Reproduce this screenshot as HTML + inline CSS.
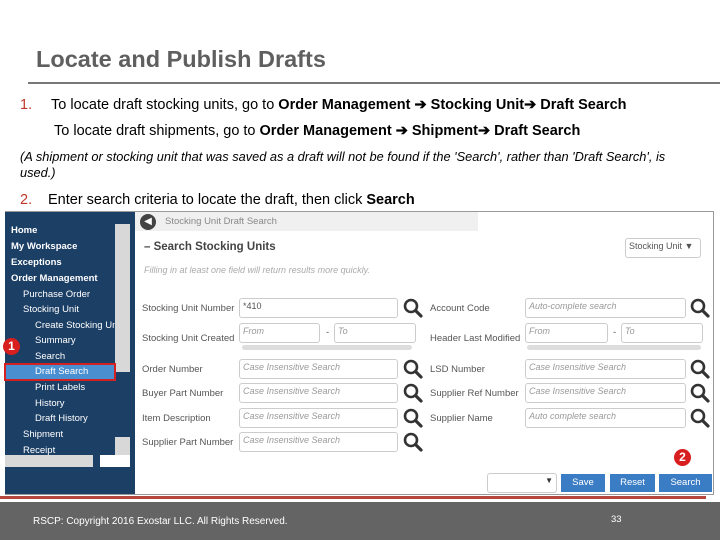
<!DOCTYPE html>
<html><head><meta charset="utf-8"><style>
body{margin:0;width:720px;height:540px;position:relative;overflow:hidden;background:#fff;font-family:"Liberation Sans",sans-serif}
.a{position:absolute;white-space:nowrap}
.t{font-size:14.5px;color:#000}
.sb{font-size:9.5px;color:#fff;font-weight:bold}
.sn{font-size:9.5px;color:#fff}
.lb{font-size:9.5px;color:#555}
.in{position:absolute;border:1px solid #ccc;border-radius:3px;background:#fff;font-size:9px;color:#999;font-style:italic;box-sizing:border-box;padding:2px 3px;height:20px}
.btn{position:absolute;top:474px;height:18px;background:#3b7dc4;color:#fff;font-size:9.5px;text-align:center;line-height:18px}
.rc{position:absolute;width:17px;height:17px;border-radius:50%;background:#d81e1e;color:#fff;font-weight:bold;font-size:12px;text-align:center;line-height:17px}
</style></head><body>
<div class="a" style="left:36px;top:46px;font-size:23.5px;font-weight:bold;color:#5f5f5f">Locate and Publish Drafts</div>
<div class="a" style="left:28px;top:82px;width:692px;height:2px;background:#777"></div>
<div class="a t" style="left:20px;top:97px;color:#c0392b">1.</div>
<div class="a t" style="left:51px;top:97px">To locate draft stocking units, go to <b>Order Management ➔ Stocking Unit➔ Draft Search</b></div>
<div class="a t" style="left:54px;top:123px">To locate draft shipments, go to <b>Order Management ➔ Shipment➔ Draft Search</b></div>
<div class="a" style="left:20px;top:149px;font-size:12.8px;font-style:italic">(A shipment or stocking unit that was saved as a draft will not be found if the 'Search', rather than 'Draft Search', is</div>
<div class="a" style="left:20px;top:165px;font-size:12.8px;font-style:italic">used.)</div>
<div class="a t" style="left:20px;top:192px;color:#c0392b">2.</div>
<div class="a t" style="left:48px;top:192px">Enter search criteria to locate the draft, then click <b>Search</b></div>

<div class="a" style="left:5px;top:211px;width:709px;height:284px;border:1px solid #999;box-sizing:border-box"></div>
<div class="a" style="left:5px;top:212px;width:130px;height:282px;background:#1c3f66"></div>
<div class="a" style="left:115px;top:224px;width:15px;height:148px;background:#d8d8d8"></div>
<div class="a" style="left:115px;top:437px;width:15px;height:30px;background:#d8d8d8"></div>
<div class="a" style="left:5px;top:455px;width:88px;height:12px;background:#d8d8d8"></div>
<div class="a" style="left:100px;top:455px;width:30px;height:12px;background:#fff"></div>
<div class="a sb" style="left:11px;top:225px">Home</div>
<div class="a sb" style="left:11px;top:241px">My Workspace</div>
<div class="a sb" style="left:11px;top:257px">Exceptions</div>
<div class="a sb" style="left:11px;top:273px">Order Management</div>
<div class="a sn" style="left:23px;top:289px">Purchase Order</div>
<div class="a sn" style="left:23px;top:304px">Stocking Unit</div>
<div class="a sn" style="left:35px;top:320px;width:80px;overflow:hidden">Create Stocking Unit</div>
<div class="a sn" style="left:35px;top:335px">Summary</div>
<div class="a sn" style="left:35px;top:351px">Search</div>
<div class="a" style="left:4px;top:363px;width:112px;height:18px;background:#4a8fd0;border:2px solid #d42020;box-sizing:border-box"></div>
<div class="a sn" style="left:35px;top:366px">Draft Search</div>
<div class="a sn" style="left:35px;top:382px">Print Labels</div>
<div class="a sn" style="left:35px;top:398px">History</div>
<div class="a sn" style="left:35px;top:413px">Draft History</div>
<div class="a sn" style="left:23px;top:429px">Shipment</div>
<div class="a sn" style="left:23px;top:445px">Receipt</div>
<div class="rc" style="left:3px;top:338px">1</div>

<div class="a" style="left:135px;top:212px;width:343px;height:19px;background:#f0f0f0"></div>
<div class="a" style="left:140px;top:214px;width:16px;height:16px;border-radius:50%;background:#444;color:#fff;font-size:10px;text-align:center;line-height:16px">◀</div>
<div class="a" style="left:165px;top:216px;font-size:9.5px;color:#888">Stocking Unit Draft Search</div>
<div class="a" style="left:144px;top:241px;font-size:11.5px;font-weight:bold;color:#444">– Search Stocking Units</div>
<div class="a" style="left:144px;top:265px;font-size:9px;font-style:italic;color:#aaa">Filling in at least one field will return results more quickly.</div>
<div class="in" style="left:625px;top:238px;width:76px;font-style:normal;color:#555">Stocking Unit ▼</div>

<div class="a lb" style="left:142px;top:303px">Stocking Unit Number</div>
<div class="in" style="left:239px;top:298px;width:159px;font-style:normal;color:#555">*410</div>
<div class="a lb" style="left:142px;top:333px">Stocking Unit Created</div>
<div class="in" style="left:239px;top:323px;width:81px">From</div>
<div class="a lb" style="left:326px;top:327px">-</div>
<div class="in" style="left:334px;top:323px;width:82px">To</div>
<div class="a" style="left:242px;top:345px;width:170px;height:5px;background:#ddd;border-radius:3px"></div>
<div class="a lb" style="left:142px;top:364px">Order Number</div>
<div class="in" style="left:239px;top:359px;width:159px">Case Insensitive Search</div>
<div class="a lb" style="left:142px;top:388px">Buyer Part Number</div>
<div class="in" style="left:239px;top:383px;width:159px">Case Insensitive Search</div>
<div class="a lb" style="left:142px;top:413px">Item Description</div>
<div class="in" style="left:239px;top:408px;width:159px">Case Insensitive Search</div>
<div class="a lb" style="left:142px;top:437px">Supplier Part Number</div>
<div class="in" style="left:239px;top:432px;width:159px">Case Insensitive Search</div>

<div class="a lb" style="left:430px;top:303px">Account Code</div>
<div class="in" style="left:525px;top:298px;width:161px">Auto-complete search</div>
<div class="a lb" style="left:430px;top:333px">Header Last Modified</div>
<div class="in" style="left:525px;top:323px;width:83px">From</div>
<div class="a lb" style="left:613px;top:327px">-</div>
<div class="in" style="left:621px;top:323px;width:82px">To</div>
<div class="a" style="left:527px;top:345px;width:174px;height:5px;background:#ddd;border-radius:3px"></div>
<div class="a lb" style="left:430px;top:364px">LSD Number</div>
<div class="in" style="left:525px;top:359px;width:161px">Case Insensitive Search</div>
<div class="a lb" style="left:430px;top:388px">Supplier Ref Number</div>
<div class="in" style="left:525px;top:383px;width:161px">Case Insensitive Search</div>
<div class="a lb" style="left:430px;top:413px">Supplier Name</div>
<div class="in" style="left:525px;top:408px;width:161px">Auto complete search</div>

<svg width="720" height="540" style="position:absolute;left:0;top:0">
<defs><g id="m"><circle cx="8" cy="8" r="6" fill="none" stroke="#333" stroke-width="2.6"/><line x1="12.5" y1="12.5" x2="18" y2="18" stroke="#333" stroke-width="3.2" stroke-linecap="round"/></g></defs>
<use href="#m" x="403" y="298"/><use href="#m" x="403" y="359"/><use href="#m" x="403" y="383"/><use href="#m" x="403" y="408"/><use href="#m" x="403" y="432"/>
<use href="#m" x="690" y="298"/><use href="#m" x="690" y="359"/><use href="#m" x="690" y="383"/><use href="#m" x="690" y="408"/>
</svg>

<div class="rc" style="left:674px;top:449px">2</div>
<div class="in" style="left:487px;top:473px;width:70px;font-style:normal;color:#333;text-align:right;font-size:8px">▼</div>
<div class="btn" style="left:561px;width:44px">Save</div>
<div class="btn" style="left:610px;width:45px">Reset</div>
<div class="btn" style="left:659px;width:53px">Search</div>

<div class="a" style="left:0;top:496px;width:706px;height:3px;background:#b5473f"></div>
<div class="a" style="left:0;top:502px;width:720px;height:38px;background:#646464"></div>
<div class="a" style="left:33px;top:516px;font-size:10px;color:#fff">RSCP:  Copyright 2016 Exostar LLC. All Rights Reserved.</div>
<div class="a" style="left:611px;top:514px;font-size:9.5px;color:#fff">33</div>
</body></html>
